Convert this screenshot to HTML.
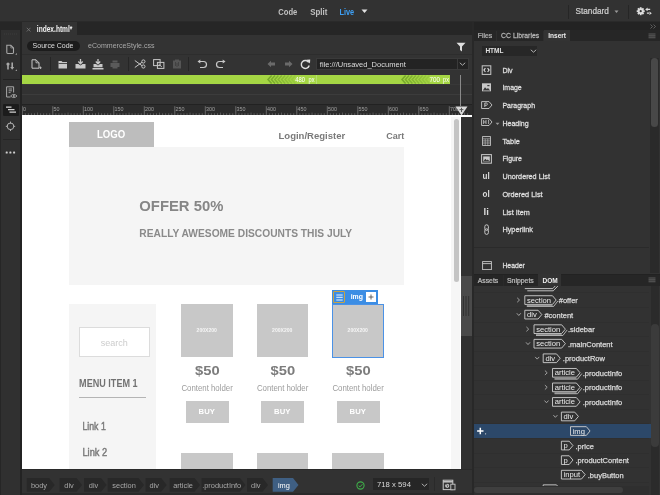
<!DOCTYPE html>
<html><head><meta charset="utf-8">
<style>
*{margin:0;padding:0;box-sizing:border-box}
html,body{width:660px;height:495px;overflow:hidden;background:#262626;font-family:"Liberation Sans",sans-serif}
.a{position:absolute;display:block}
.t{position:absolute;white-space:nowrap;line-height:1}
svg text{font-family:"Liberation Sans",sans-serif;white-space:pre}
svg.a{will-change:transform}
</style></head><body>
<div class="a" style="left:0px;top:0px;width:660px;height:22px;background:#323232;"></div>
<div class="a" style="left:0px;top:21.3px;width:660px;height:0.7px;background:#2a2a2a;"></div>
<svg class="a" style="left:276px;top:-15px;" width="25" height="40"><text x="0" y="0" transform="translate(2.30 30.20) scale(0.860 1)" font-size="8.84" fill="#c2c2c2" font-weight="bold">Code</text></svg>
<svg class="a" style="left:308px;top:-15px;" width="24" height="40"><text x="0" y="0" transform="translate(2.20 30.20) scale(0.893 1)" font-size="8.84" fill="#c2c2c2" font-weight="bold">Split</text></svg>
<svg class="a" style="left:337px;top:-15px;" width="21" height="40"><text x="0" y="0" transform="translate(2.40 30.20) scale(0.831 1)" font-size="8.84" fill="#3ea0f5" font-weight="bold">Live</text></svg>
<svg class="a" style="left:361px;top:9px;" width="7" height="5" viewBox="0 0 7 5"><path d="M0.5 0.5 L6.5 0.5 L3.5 4 Z" fill="#e0e0e0"/></svg>
<div class="a" style="left:568px;top:4.5px;width:1px;height:14px;background:#262626;"></div>
<div class="a" style="left:628px;top:4.5px;width:1px;height:14px;background:#262626;"></div>
<svg class="a" style="left:573px;top:-17px;" width="40" height="40"><text x="0" y="0" transform="translate(2.50 30.90) scale(0.887 1)" font-size="9.28" fill="#cdcdcd" stroke="#cdcdcd" stroke-width="0.25">Standard</text></svg>
<svg class="a" style="left:614px;top:10px;" width="5" height="4" viewBox="0 0 5 4"><path d="M0.5 0.5 L4.5 0.5 L2.5 3 Z" fill="#9a9a9a"/></svg>
<svg class="a" style="left:634px;top:4px;" width="20" height="14" viewBox="0 0 20 14"><g fill="#dcdcdc" transform="translate(6.7 7.2)"><circle r="3"/>
<rect x="-0.9" y="-4" width="1.8" height="8"/><rect x="-4" y="-0.9" width="8" height="1.8"/>
<rect x="-0.9" y="-4" width="1.8" height="8" transform="rotate(45)"/><rect x="-0.9" y="-4" width="1.8" height="8" transform="rotate(-45)"/></g>
<circle cx="6.7" cy="7.2" r="1.1" fill="#323232"/>
<path d="M11.2 5.4 L13.6 3.6 V7.2 Z M13 4.8 H16.2 V6 H13 Z M17.8 9.2 L15.4 7.4 V11 Z M12.9 8.6 H16 V9.8 H12.9 Z" fill="#dcdcdc"/></svg>
<div class="a" style="left:0px;top:22px;width:22px;height:473px;background:#262626;"></div>
<div class="a" style="left:1px;top:30px;width:19px;height:465px;background:#303030;"></div>
<div class="a" style="left:20px;top:30px;width:2px;height:465px;background:#232323;"></div>
<svg class="a" style="left:4px;top:33px;" width="13" height="2" viewBox="0 0 13 2"><path d="M0 1 H13" stroke="#3c3c3c" stroke-width="1" stroke-dasharray="1 1"/></svg>
<svg class="a" style="left:5px;top:44px;" width="13" height="12" viewBox="0 0 13 12"><path d="M1.8 1.3 H5.8 L8.5 4 V8.6 Q8.5 9.5 7.6 9.5 H2.7 Q1.8 9.5 1.8 8.6 Z" fill="none" stroke="#a8a8a8" stroke-width="1.1"/><path d="M5.8 1.3 V4 H8.5" fill="none" stroke="#a8a8a8" stroke-width="0.6"/><path d="M12 9 V10.8 H10.2 Z" fill="#999"/></svg>
<svg class="a" style="left:5px;top:61px;" width="13" height="12" viewBox="0 0 13 12"><path d="M3 8.6 V3.8 M7.2 1.5 V6.8" stroke="#a8a8a8" stroke-width="1.6" fill="none"/><circle cx="3" cy="3" r="1.6" fill="#a8a8a8"/><path d="M5.2 6 L7.2 8.8 L9.2 6 Z" fill="#a8a8a8"/><path d="M12 8.3 V10.1 H10.2 Z" fill="#999"/></svg>
<div class="a" style="left:3px;top:79px;width:17px;height:0.8px;background:#222222;"></div>
<svg class="a" style="left:5px;top:86px;" width="13" height="13" viewBox="0 0 13 13"><path d="M1.6 0.8 H8.6 V6.5 M1.6 0.8 V11 H5.5" fill="none" stroke="#a8a8a8" stroke-width="1"/><path d="M3.6 3 H7 M3.6 4.8 H7 M3.6 6.6 H5.6" stroke="#a8a8a8" stroke-width="0.9"/><path d="M5.6 10 Q8.8 6.8 12 10 Q8.8 13.2 5.6 10 Z" fill="#2a2a2a" stroke="#a8a8a8" stroke-width="0.9"/><circle cx="8.8" cy="10" r="1" fill="#a8a8a8"/></svg>
<div class="a" style="left:3px;top:103.5px;width:16px;height:12.5px;background:#1c1c1c;border-radius:1px"></div>
<svg class="a" style="left:5px;top:105px;" width="12" height="10" viewBox="0 0 12 10"><path d="M1 2.2 H6.5 M3 4.6 H9.5 M4.5 7.2 H11" stroke="#d0d0d0" stroke-width="1.2"/></svg>
<svg class="a" style="left:5px;top:121px;" width="11" height="11" viewBox="0 0 11 11"><circle cx="5.5" cy="5.3" r="3.3" fill="none" stroke="#b0b0b0" stroke-width="1"/><path d="M5.5 0.6 V2.6 M5.5 8 V10 M0.8 5.3 H2.8 M8.2 5.3 H10.2" stroke="#b0b0b0" stroke-width="1"/></svg>
<div class="a" style="left:3px;top:139.2px;width:17px;height:0.8px;background:#262626;"></div>
<svg class="a" style="left:5px;top:151.2px;" width="12" height="3" viewBox="0 0 12 3"><rect x="0.7" y="0.5" width="2" height="2" rx="0.6" fill="#d0d0d0"/><rect x="4.4" y="0.5" width="2" height="2" rx="0.6" fill="#d0d0d0"/><rect x="8.1" y="0.5" width="2" height="2" rx="0.6" fill="#d0d0d0"/></svg>
<div class="a" style="left:22px;top:22px;width:450px;height:13px;background:#262626;"></div>
<div class="a" style="left:22px;top:22px;width:55px;height:13px;background:#333333;"></div>
<svg class="a" style="left:26px;top:27px;" width="5" height="5" viewBox="0 0 5 5"><path d="M0.8 0.8 L4.5 4.5 M4.5 0.8 L0.8 4.5" stroke="#7a7a7a" stroke-width="0.8"/></svg>
<svg class="a" style="left:34px;top:2px;" width="42" height="40"><text x="0" y="0" transform="translate(2.80 30.10) scale(0.812 1)" font-size="8.14" fill="#f0f0f0" font-weight="bold">index.html*</text></svg>
<div class="a" style="left:22px;top:35px;width:450px;height:19px;background:#333333;"></div>
<div class="a" style="left:27px;top:40.5px;width:52.5px;height:10.5px;background:#1c1c1c;border-radius:6px"></div>
<svg class="a" style="left:30px;top:18px;" width="47" height="40"><text x="0" y="0" transform="translate(2.60 30.00) scale(0.862 1)" font-size="8.12" fill="#dedede">Source Code</text></svg>
<svg class="a" style="left:86px;top:18px;" width="73" height="40"><text x="0" y="0" transform="translate(2.00 30.10) scale(0.902 1)" font-size="7.83" fill="#a8a8a8">eCommerceStyle.css</text></svg>
<svg class="a" style="left:456px;top:42px;" width="10" height="10" viewBox="0 0 10 10"><path d="M0.5 0.8 H9.5 L6 4.6 V9.4 L4 8 V4.6 Z" fill="#e0e0e0"/></svg>
<div class="a" style="left:22px;top:54px;width:450px;height:16px;background:#333333;"></div>
<div class="a" style="left:22px;top:54px;width:450px;height:0.8px;background:#2d2d2d;"></div>
<div class="a" style="left:22px;top:70px;width:450px;height:15px;background:#333333;"></div>
<svg class="a" style="left:31px;top:59px;" width="11" height="10" viewBox="0 0 11 10"><path d="M1 0.8 H5 L8 3.8 V9.2 H1 Z" fill="none" stroke="#c8c8c8" stroke-width="1"/><path d="M5 0.8 V3.8 H8" fill="none" stroke="#c8c8c8" stroke-width="0.8"/><path d="M9.5 7.5 V10 M8.3 8.8 H10.7" stroke="#c8c8c8" stroke-width="0.8"/></svg>
<div class="a" style="left:50px;top:57px;width:1px;height:14px;background:#262626;"></div>
<svg class="a" style="left:58px;top:60px;" width="10" height="9" viewBox="0 0 10 9"><path d="M0.5 1 H3.5 L4.5 2 H9 V8.5 H0.5 Z" fill="#c8c8c8"/><path d="M0.5 3.5 H9" stroke="#2e2e2e" stroke-width="0.8"/></svg>
<svg class="a" style="left:75px;top:59px;" width="11" height="10" viewBox="0 0 11 10"><path d="M5.5 0 V4.5 M3.3 2.5 L5.5 4.8 L7.7 2.5" stroke="#c8c8c8" stroke-width="1.3" fill="none"/><path d="M0.5 5 H3.5 L5.5 6.5 L7.5 5 H10.5 V9.5 H0.5 Z" fill="#c8c8c8"/></svg>
<svg class="a" style="left:92px;top:58.5px;" width="12" height="11" viewBox="0 0 12 11"><path d="M6 0 V4.5 M3.8 2.5 L6 4.8 L8.2 2.5" stroke="#c8c8c8" stroke-width="1.3" fill="none"/><path d="M1.5 5 H4 L6 6.5 L8 5 H10.5 V8.3 H1.5 Z" fill="#c8c8c8"/><path d="M0.5 9 H11.5 V10.5 H0.5 Z" fill="#c8c8c8"/></svg>
<svg class="a" style="left:110px;top:59.5px;" width="10" height="9" viewBox="0 0 10 9"><path d="M2.5 0.5 H7.5 V2.5 H2.5 Z M0.5 3 H9.5 V7 H7.5 V8.5 H2.5 V7 H0.5 Z" fill="#5a5a5a"/></svg>
<div class="a" style="left:127.5px;top:57px;width:1px;height:14px;background:#262626;"></div>
<svg class="a" style="left:134px;top:59px;" width="12" height="10" viewBox="0 0 12 10"><circle cx="9.4" cy="2.5" r="1.6" fill="none" stroke="#c8c8c8" stroke-width="1"/><circle cx="9.4" cy="7.5" r="1.6" fill="none" stroke="#c8c8c8" stroke-width="1"/><path d="M8 3.3 L0.8 8.5 M8 6.7 L0.8 1.5" stroke="#c8c8c8" stroke-width="1"/></svg>
<svg class="a" style="left:152.5px;top:59px;" width="12" height="10" viewBox="0 0 12 10"><rect x="0.6" y="0.6" width="6.5" height="6" fill="none" stroke="#c8c8c8" stroke-width="1"/><rect x="4.4" y="3.4" width="6.5" height="6" fill="none" stroke="#c8c8c8" stroke-width="1"/><path d="M5.5 5 L9 8" stroke="#c8c8c8" stroke-width="0.8"/></svg>
<svg class="a" style="left:171.5px;top:59px;" width="10" height="10" viewBox="0 0 10 10"><path d="M1 1.5 H3 V0.5 H7 V1.5 H9 V9.5 H1 Z" fill="#555"/><path d="M3.5 3 V7 M5 4 V8 M6.5 3 V7" stroke="#3a3a3a" stroke-width="0.7"/></svg>
<div class="a" style="left:188px;top:57px;width:1px;height:14px;background:#262626;"></div>
<svg class="a" style="left:197px;top:59px;" width="11" height="10" viewBox="0 0 11 10"><path d="M2.5 2.5 H6.5 A3 3 0 0 1 6.5 8.5 H3" fill="none" stroke="#c8c8c8" stroke-width="1.2"/><path d="M0.5 2.5 L3.3 0.5 V4.5 Z" fill="#c8c8c8"/></svg>
<svg class="a" style="left:215px;top:59px;" width="11" height="10" viewBox="0 0 11 10"><path d="M8.5 2.5 H4.5 A3 3 0 0 0 4.5 8.5 H8" fill="none" stroke="#c8c8c8" stroke-width="1.2"/><path d="M10.5 2.5 L7.7 0.5 V4.5 Z" fill="#c8c8c8"/></svg>
<svg class="a" style="left:267px;top:60px;" width="9" height="8" viewBox="0 0 9 8"><path d="M0.5 4 L4 0.8 V2.6 H8 V5.4 H4 V7.2 Z" fill="#6a6a6a"/></svg>
<svg class="a" style="left:284px;top:60px;" width="9" height="8" viewBox="0 0 9 8"><path d="M8.5 4 L5 0.8 V2.6 H1 V5.4 H5 V7.2 Z" fill="#6a6a6a"/></svg>
<svg class="a" style="left:299.5px;top:59px;" width="11" height="11" viewBox="0 0 11 11"><path d="M8.7 3.3 A4 4 0 1 0 9.2 6.5" fill="none" stroke="#e0e0e0" stroke-width="1.4"/><path d="M6.2 0.8 L10.2 0.6 L10 4.6 Z" fill="#e0e0e0"/></svg>
<div class="a" style="left:315.5px;top:58.4px;width:153px;height:11.4px;background:#232323;border:1px solid #3a3a3a"></div>
<svg class="a" style="left:317px;top:36px;" width="93" height="40"><text x="0" y="0" transform="translate(2.80 30.60) scale(0.980 1)" font-size="7.68" fill="#dcdcdc">file:///Unsaved_Document</text></svg>
<div class="a" style="left:457px;top:58.4px;width:11.5px;height:11.4px;background:#232323;border:1px solid #3a3a3a"></div>
<svg class="a" style="left:458.5px;top:62px;" width="7" height="4" viewBox="0 0 7 4"><path d="M0.8 0.8 L3.5 3.2 L6.2 0.8" fill="none" stroke="#bbb" stroke-width="0.9"/></svg>
<div class="a" style="left:22px;top:75px;width:428px;height:9.3px;background:#a5d644;"></div>
<svg class="a" style="left:266px;top:75px;" width="34" height="9.2" viewBox="0 0 34 9.2"><path d="M5.6 0.6 L2.0 4.6 L5.6 8.6" fill="none" stroke="#74a52a" stroke-width="1.5" opacity="0.95"/><path d="M9.0 0.6 L5.4 4.6 L9.0 8.6" fill="none" stroke="#74a52a" stroke-width="1.5" opacity="0.85"/><path d="M12.4 0.6 L8.8 4.6 L12.4 8.6" fill="none" stroke="#74a52a" stroke-width="1.5" opacity="0.75"/><path d="M15.799999999999999 0.6 L12.2 4.6 L15.799999999999999 8.6" fill="none" stroke="#74a52a" stroke-width="1.5" opacity="0.65"/><path d="M19.2 0.6 L15.6 4.6 L19.2 8.6" fill="none" stroke="#74a52a" stroke-width="1.5" opacity="0.55"/><path d="M22.6 0.6 L19.0 4.6 L22.6 8.6" fill="none" stroke="#74a52a" stroke-width="1.5" opacity="0.45"/><path d="M26.0 0.6 L22.4 4.6 L26.0 8.6" fill="none" stroke="#74a52a" stroke-width="1.5" opacity="0.35"/><path d="M29.400000000000002 0.6 L25.8 4.6 L29.400000000000002 8.6" fill="none" stroke="#74a52a" stroke-width="1.5" opacity="0.25"/></svg>
<svg class="a" style="left:293px;top:52px;" width="16" height="40"><text x="0" y="0" transform="translate(2.20 30.00) scale(0.844 1)" font-size="6.96" fill="#ffffff">480</text></svg>
<svg class="a" style="left:306px;top:52px;" width="13" height="40"><text x="0" y="0" transform="translate(2.50 30.00) scale(0.815 1)" font-size="6.98" fill="#ffffff">px</text></svg>
<div class="a" style="left:316px;top:75px;width:1px;height:9.2px;background:#b6de70;"></div>
<svg class="a" style="left:400px;top:75px;" width="34" height="9.2" viewBox="0 0 34 9.2"><path d="M5.6 0.6 L2.0 4.6 L5.6 8.6" fill="none" stroke="#74a52a" stroke-width="1.5" opacity="0.95"/><path d="M9.0 0.6 L5.4 4.6 L9.0 8.6" fill="none" stroke="#74a52a" stroke-width="1.5" opacity="0.85"/><path d="M12.4 0.6 L8.8 4.6 L12.4 8.6" fill="none" stroke="#74a52a" stroke-width="1.5" opacity="0.75"/><path d="M15.799999999999999 0.6 L12.2 4.6 L15.799999999999999 8.6" fill="none" stroke="#74a52a" stroke-width="1.5" opacity="0.65"/><path d="M19.2 0.6 L15.6 4.6 L19.2 8.6" fill="none" stroke="#74a52a" stroke-width="1.5" opacity="0.55"/><path d="M22.6 0.6 L19.0 4.6 L22.6 8.6" fill="none" stroke="#74a52a" stroke-width="1.5" opacity="0.45"/><path d="M26.0 0.6 L22.4 4.6 L26.0 8.6" fill="none" stroke="#74a52a" stroke-width="1.5" opacity="0.35"/><path d="M29.400000000000002 0.6 L25.8 4.6 L29.400000000000002 8.6" fill="none" stroke="#74a52a" stroke-width="1.5" opacity="0.25"/></svg>
<svg class="a" style="left:427px;top:52px;" width="17" height="40"><text x="0" y="0" transform="translate(2.50 30.00) scale(0.904 1)" font-size="6.96" fill="#ffffff">700</text></svg>
<svg class="a" style="left:441px;top:52px;" width="13" height="40"><text x="0" y="0" transform="translate(2.00 30.00) scale(0.815 1)" font-size="6.98" fill="#ffffff">px</text></svg>
<div class="a" style="left:22px;top:85px;width:450px;height:19.5px;background:#323232;"></div>
<div class="a" style="left:22px;top:84.3px;width:450px;height:0.7px;background:#383838;"></div>
<div class="a" style="left:22px;top:94.3px;width:450px;height:0.8px;background:#3c3c3c;"></div>
<div class="a" style="left:22px;top:104px;width:450px;height:1.4px;background:#222222;"></div>
<div class="a" style="left:22px;top:105.4px;width:450px;height:10px;background:#2c2c2c;"></div>
<svg class="a" style="left:22px;top:105px;" width="450" height="10.5" viewBox="0 0 450 10.5"><path d="M0.30 1.2 V10.5" stroke="#7a7a7a" stroke-width="0.8"/><text x="1.10" y="5.8" font-size="5.4" fill="#a0a0a0" font-family="Liberation Sans">0</text><path d="M3.35 8.3 V10.5" stroke="#777" stroke-width="0.7"/><path d="M6.40 8.3 V10.5" stroke="#777" stroke-width="0.7"/><path d="M9.45 8.3 V10.5" stroke="#777" stroke-width="0.7"/><path d="M12.50 8.3 V10.5" stroke="#777" stroke-width="0.7"/><path d="M15.55 7.6 V10.5" stroke="#707070" stroke-width="0.7"/><path d="M18.60 8.3 V10.5" stroke="#777" stroke-width="0.7"/><path d="M21.65 8.3 V10.5" stroke="#777" stroke-width="0.7"/><path d="M24.70 8.3 V10.5" stroke="#777" stroke-width="0.7"/><path d="M27.75 8.3 V10.5" stroke="#777" stroke-width="0.7"/><path d="M30.80 1.2 V10.5" stroke="#7a7a7a" stroke-width="0.8"/><text x="31.60" y="5.8" font-size="5.4" fill="#a0a0a0" font-family="Liberation Sans">50</text><path d="M33.85 8.3 V10.5" stroke="#777" stroke-width="0.7"/><path d="M36.90 8.3 V10.5" stroke="#777" stroke-width="0.7"/><path d="M39.95 8.3 V10.5" stroke="#777" stroke-width="0.7"/><path d="M43.00 8.3 V10.5" stroke="#777" stroke-width="0.7"/><path d="M46.05 7.6 V10.5" stroke="#707070" stroke-width="0.7"/><path d="M49.10 8.3 V10.5" stroke="#777" stroke-width="0.7"/><path d="M52.15 8.3 V10.5" stroke="#777" stroke-width="0.7"/><path d="M55.20 8.3 V10.5" stroke="#777" stroke-width="0.7"/><path d="M58.25 8.3 V10.5" stroke="#777" stroke-width="0.7"/><path d="M61.30 1.2 V10.5" stroke="#7a7a7a" stroke-width="0.8"/><text x="62.10" y="5.8" font-size="5.4" fill="#a0a0a0" font-family="Liberation Sans">100</text><path d="M64.35 8.3 V10.5" stroke="#777" stroke-width="0.7"/><path d="M67.40 8.3 V10.5" stroke="#777" stroke-width="0.7"/><path d="M70.45 8.3 V10.5" stroke="#777" stroke-width="0.7"/><path d="M73.50 8.3 V10.5" stroke="#777" stroke-width="0.7"/><path d="M76.55 7.6 V10.5" stroke="#707070" stroke-width="0.7"/><path d="M79.60 8.3 V10.5" stroke="#777" stroke-width="0.7"/><path d="M82.65 8.3 V10.5" stroke="#777" stroke-width="0.7"/><path d="M85.70 8.3 V10.5" stroke="#777" stroke-width="0.7"/><path d="M88.75 8.3 V10.5" stroke="#777" stroke-width="0.7"/><path d="M91.80 1.2 V10.5" stroke="#7a7a7a" stroke-width="0.8"/><text x="92.60" y="5.8" font-size="5.4" fill="#a0a0a0" font-family="Liberation Sans">150</text><path d="M94.85 8.3 V10.5" stroke="#777" stroke-width="0.7"/><path d="M97.90 8.3 V10.5" stroke="#777" stroke-width="0.7"/><path d="M100.95 8.3 V10.5" stroke="#777" stroke-width="0.7"/><path d="M104.00 8.3 V10.5" stroke="#777" stroke-width="0.7"/><path d="M107.05 7.6 V10.5" stroke="#707070" stroke-width="0.7"/><path d="M110.10 8.3 V10.5" stroke="#777" stroke-width="0.7"/><path d="M113.15 8.3 V10.5" stroke="#777" stroke-width="0.7"/><path d="M116.20 8.3 V10.5" stroke="#777" stroke-width="0.7"/><path d="M119.25 8.3 V10.5" stroke="#777" stroke-width="0.7"/><path d="M122.30 1.2 V10.5" stroke="#7a7a7a" stroke-width="0.8"/><text x="123.10" y="5.8" font-size="5.4" fill="#a0a0a0" font-family="Liberation Sans">200</text><path d="M125.35 8.3 V10.5" stroke="#777" stroke-width="0.7"/><path d="M128.40 8.3 V10.5" stroke="#777" stroke-width="0.7"/><path d="M131.45 8.3 V10.5" stroke="#777" stroke-width="0.7"/><path d="M134.50 8.3 V10.5" stroke="#777" stroke-width="0.7"/><path d="M137.55 7.6 V10.5" stroke="#707070" stroke-width="0.7"/><path d="M140.60 8.3 V10.5" stroke="#777" stroke-width="0.7"/><path d="M143.65 8.3 V10.5" stroke="#777" stroke-width="0.7"/><path d="M146.70 8.3 V10.5" stroke="#777" stroke-width="0.7"/><path d="M149.75 8.3 V10.5" stroke="#777" stroke-width="0.7"/><path d="M152.80 1.2 V10.5" stroke="#7a7a7a" stroke-width="0.8"/><text x="153.60" y="5.8" font-size="5.4" fill="#a0a0a0" font-family="Liberation Sans">250</text><path d="M155.85 8.3 V10.5" stroke="#777" stroke-width="0.7"/><path d="M158.90 8.3 V10.5" stroke="#777" stroke-width="0.7"/><path d="M161.95 8.3 V10.5" stroke="#777" stroke-width="0.7"/><path d="M165.00 8.3 V10.5" stroke="#777" stroke-width="0.7"/><path d="M168.05 7.6 V10.5" stroke="#707070" stroke-width="0.7"/><path d="M171.10 8.3 V10.5" stroke="#777" stroke-width="0.7"/><path d="M174.15 8.3 V10.5" stroke="#777" stroke-width="0.7"/><path d="M177.20 8.3 V10.5" stroke="#777" stroke-width="0.7"/><path d="M180.25 8.3 V10.5" stroke="#777" stroke-width="0.7"/><path d="M183.30 1.2 V10.5" stroke="#7a7a7a" stroke-width="0.8"/><text x="184.10" y="5.8" font-size="5.4" fill="#a0a0a0" font-family="Liberation Sans">300</text><path d="M186.35 8.3 V10.5" stroke="#777" stroke-width="0.7"/><path d="M189.40 8.3 V10.5" stroke="#777" stroke-width="0.7"/><path d="M192.45 8.3 V10.5" stroke="#777" stroke-width="0.7"/><path d="M195.50 8.3 V10.5" stroke="#777" stroke-width="0.7"/><path d="M198.55 7.6 V10.5" stroke="#707070" stroke-width="0.7"/><path d="M201.60 8.3 V10.5" stroke="#777" stroke-width="0.7"/><path d="M204.65 8.3 V10.5" stroke="#777" stroke-width="0.7"/><path d="M207.70 8.3 V10.5" stroke="#777" stroke-width="0.7"/><path d="M210.75 8.3 V10.5" stroke="#777" stroke-width="0.7"/><path d="M213.80 1.2 V10.5" stroke="#7a7a7a" stroke-width="0.8"/><text x="214.60" y="5.8" font-size="5.4" fill="#a0a0a0" font-family="Liberation Sans">350</text><path d="M216.85 8.3 V10.5" stroke="#777" stroke-width="0.7"/><path d="M219.90 8.3 V10.5" stroke="#777" stroke-width="0.7"/><path d="M222.95 8.3 V10.5" stroke="#777" stroke-width="0.7"/><path d="M226.00 8.3 V10.5" stroke="#777" stroke-width="0.7"/><path d="M229.05 7.6 V10.5" stroke="#707070" stroke-width="0.7"/><path d="M232.10 8.3 V10.5" stroke="#777" stroke-width="0.7"/><path d="M235.15 8.3 V10.5" stroke="#777" stroke-width="0.7"/><path d="M238.20 8.3 V10.5" stroke="#777" stroke-width="0.7"/><path d="M241.25 8.3 V10.5" stroke="#777" stroke-width="0.7"/><path d="M244.30 1.2 V10.5" stroke="#7a7a7a" stroke-width="0.8"/><text x="245.10" y="5.8" font-size="5.4" fill="#a0a0a0" font-family="Liberation Sans">400</text><path d="M247.35 8.3 V10.5" stroke="#777" stroke-width="0.7"/><path d="M250.40 8.3 V10.5" stroke="#777" stroke-width="0.7"/><path d="M253.45 8.3 V10.5" stroke="#777" stroke-width="0.7"/><path d="M256.50 8.3 V10.5" stroke="#777" stroke-width="0.7"/><path d="M259.55 7.6 V10.5" stroke="#707070" stroke-width="0.7"/><path d="M262.60 8.3 V10.5" stroke="#777" stroke-width="0.7"/><path d="M265.65 8.3 V10.5" stroke="#777" stroke-width="0.7"/><path d="M268.70 8.3 V10.5" stroke="#777" stroke-width="0.7"/><path d="M271.75 8.3 V10.5" stroke="#777" stroke-width="0.7"/><path d="M274.80 1.2 V10.5" stroke="#7a7a7a" stroke-width="0.8"/><text x="275.60" y="5.8" font-size="5.4" fill="#a0a0a0" font-family="Liberation Sans">450</text><path d="M277.85 8.3 V10.5" stroke="#777" stroke-width="0.7"/><path d="M280.90 8.3 V10.5" stroke="#777" stroke-width="0.7"/><path d="M283.95 8.3 V10.5" stroke="#777" stroke-width="0.7"/><path d="M287.00 8.3 V10.5" stroke="#777" stroke-width="0.7"/><path d="M290.05 7.6 V10.5" stroke="#707070" stroke-width="0.7"/><path d="M293.10 8.3 V10.5" stroke="#777" stroke-width="0.7"/><path d="M296.15 8.3 V10.5" stroke="#777" stroke-width="0.7"/><path d="M299.20 8.3 V10.5" stroke="#777" stroke-width="0.7"/><path d="M302.25 8.3 V10.5" stroke="#777" stroke-width="0.7"/><path d="M305.30 1.2 V10.5" stroke="#7a7a7a" stroke-width="0.8"/><text x="306.10" y="5.8" font-size="5.4" fill="#a0a0a0" font-family="Liberation Sans">500</text><path d="M308.35 8.3 V10.5" stroke="#777" stroke-width="0.7"/><path d="M311.40 8.3 V10.5" stroke="#777" stroke-width="0.7"/><path d="M314.45 8.3 V10.5" stroke="#777" stroke-width="0.7"/><path d="M317.50 8.3 V10.5" stroke="#777" stroke-width="0.7"/><path d="M320.55 7.6 V10.5" stroke="#707070" stroke-width="0.7"/><path d="M323.60 8.3 V10.5" stroke="#777" stroke-width="0.7"/><path d="M326.65 8.3 V10.5" stroke="#777" stroke-width="0.7"/><path d="M329.70 8.3 V10.5" stroke="#777" stroke-width="0.7"/><path d="M332.75 8.3 V10.5" stroke="#777" stroke-width="0.7"/><path d="M335.80 1.2 V10.5" stroke="#7a7a7a" stroke-width="0.8"/><text x="336.60" y="5.8" font-size="5.4" fill="#a0a0a0" font-family="Liberation Sans">550</text><path d="M338.85 8.3 V10.5" stroke="#777" stroke-width="0.7"/><path d="M341.90 8.3 V10.5" stroke="#777" stroke-width="0.7"/><path d="M344.95 8.3 V10.5" stroke="#777" stroke-width="0.7"/><path d="M348.00 8.3 V10.5" stroke="#777" stroke-width="0.7"/><path d="M351.05 7.6 V10.5" stroke="#707070" stroke-width="0.7"/><path d="M354.10 8.3 V10.5" stroke="#777" stroke-width="0.7"/><path d="M357.15 8.3 V10.5" stroke="#777" stroke-width="0.7"/><path d="M360.20 8.3 V10.5" stroke="#777" stroke-width="0.7"/><path d="M363.25 8.3 V10.5" stroke="#777" stroke-width="0.7"/><path d="M366.30 1.2 V10.5" stroke="#7a7a7a" stroke-width="0.8"/><text x="367.10" y="5.8" font-size="5.4" fill="#a0a0a0" font-family="Liberation Sans">600</text><path d="M369.35 8.3 V10.5" stroke="#777" stroke-width="0.7"/><path d="M372.40 8.3 V10.5" stroke="#777" stroke-width="0.7"/><path d="M375.45 8.3 V10.5" stroke="#777" stroke-width="0.7"/><path d="M378.50 8.3 V10.5" stroke="#777" stroke-width="0.7"/><path d="M381.55 7.6 V10.5" stroke="#707070" stroke-width="0.7"/><path d="M384.60 8.3 V10.5" stroke="#777" stroke-width="0.7"/><path d="M387.65 8.3 V10.5" stroke="#777" stroke-width="0.7"/><path d="M390.70 8.3 V10.5" stroke="#777" stroke-width="0.7"/><path d="M393.75 8.3 V10.5" stroke="#777" stroke-width="0.7"/><path d="M396.80 1.2 V10.5" stroke="#7a7a7a" stroke-width="0.8"/><text x="397.60" y="5.8" font-size="5.4" fill="#a0a0a0" font-family="Liberation Sans">650</text><path d="M399.85 8.3 V10.5" stroke="#777" stroke-width="0.7"/><path d="M402.90 8.3 V10.5" stroke="#777" stroke-width="0.7"/><path d="M405.95 8.3 V10.5" stroke="#777" stroke-width="0.7"/><path d="M409.00 8.3 V10.5" stroke="#777" stroke-width="0.7"/><path d="M412.05 7.6 V10.5" stroke="#707070" stroke-width="0.7"/><path d="M415.10 8.3 V10.5" stroke="#777" stroke-width="0.7"/><path d="M418.15 8.3 V10.5" stroke="#777" stroke-width="0.7"/><path d="M421.20 8.3 V10.5" stroke="#777" stroke-width="0.7"/><path d="M424.25 8.3 V10.5" stroke="#777" stroke-width="0.7"/><path d="M427.30 1.2 V10.5" stroke="#7a7a7a" stroke-width="0.8"/><text x="428.10" y="5.8" font-size="5.4" fill="#a0a0a0" font-family="Liberation Sans">700</text><path d="M430.35 8.3 V10.5" stroke="#777" stroke-width="0.7"/><path d="M433.40 8.3 V10.5" stroke="#777" stroke-width="0.7"/><path d="M436.45 8.3 V10.5" stroke="#777" stroke-width="0.7"/><path d="M439.50 8.3 V10.5" stroke="#777" stroke-width="0.7"/><path d="M442.55 7.6 V10.5" stroke="#707070" stroke-width="0.7"/><path d="M445.60 8.3 V10.5" stroke="#777" stroke-width="0.7"/></svg>
<div class="a" style="left:22px;top:115px;width:450px;height:2px;background:#ffffff;"></div>
<div class="a" style="left:460.3px;top:75px;width:1.2px;height:31px;background:#8a8a8a;"></div>
<svg class="a" style="left:454.5px;top:106px;" width="13" height="10" viewBox="0 0 13 10"><path d="M0.5 0.5 H12.5 L6.5 9.5 Z" fill="#d8d8d8"/><path d="M6.5 1.8 V6 M4.6 3.6 H8.4" stroke="#555" stroke-width="1"/></svg>
<div class="a" style="left:22px;top:117px;width:439px;height:352px;background:#ffffff;"></div>
<div class="a" style="left:461px;top:117px;width:11px;height:352px;background:#313131;"></div>
<div class="a" style="left:472px;top:22px;width:2px;height:473px;background:#282828;"></div>
<div class="a" style="left:461.4px;top:276.4px;width:10.3px;height:59.4px;background:#4a4a4a;"></div>
<svg class="a" style="left:462px;top:296px;" width="8" height="20" viewBox="0 0 8 20"><path d="M1.5 0 V20 M4 0 V20 M6.7 0 V20" stroke="#2c2c2c" stroke-width="0.8"/></svg>
<div class="a" style="left:69px;top:122px;width:85px;height:25px;background:#bdbdbd;"></div>
<svg class="a" style="left:95px;top:108px;" width="35" height="40"><text x="0" y="0" transform="translate(2.00 30.10) scale(0.947 1)" font-size="10.14" fill="#ffffff" font-weight="bold">LOGO</text></svg>
<svg class="a" style="left:276px;top:108px;" width="73" height="40"><text x="0" y="0" transform="translate(2.50 30.50) scale(0.968 1)" font-size="9.86" fill="#7a7a7a" font-weight="bold">Login/Register</text></svg>
<svg class="a" style="left:384px;top:108px;" width="25" height="40"><text x="0" y="0" transform="translate(2.20 30.50) scale(0.918 1)" font-size="9.86" fill="#7a7a7a" font-weight="bold">Cart</text></svg>
<div class="a" style="left:69px;top:147px;width:335px;height:138px;background:#f5f5f5;"></div>
<svg class="a" style="left:137px;top:180px;" width="91" height="40"><text x="0" y="0" transform="translate(2.30 30.70) scale(0.966 1)" font-size="15.36" fill="#868686" font-weight="bold">OFFER 50%</text></svg>
<svg class="a" style="left:137px;top:206px;" width="220" height="40"><text x="0" y="0" transform="translate(2.30 30.70) scale(0.995 1)" font-size="10.29" fill="#8a8a8a" font-weight="bold">REALLY AWESOME DISCOUNTS THIS JULY</text></svg>
<div class="a" style="left:69px;top:304px;width:87px;height:165px;background:#f5f5f5;"></div>
<div class="a" style="left:79px;top:327px;width:70.7px;height:29.6px;background:#ffffff;border:1px solid #dcdcdc"></div>
<svg class="a" style="left:98px;top:315px;" width="34" height="40"><text x="0" y="0" transform="translate(2.80 30.50) scale(0.977 1)" font-size="9.24" fill="#cccccc">search</text></svg>
<svg class="a" style="left:77px;top:357px;" width="65" height="40"><text x="0" y="0" transform="translate(2.10 30.30) scale(0.908 1)" font-size="10.00" fill="#717171" font-weight="bold">MENU ITEM 1</text></svg>
<div class="a" style="left:78.5px;top:396.8px;width:67.5px;height:1px;background:#b4b4b4;"></div>
<svg class="a" style="left:80px;top:400px;" width="30" height="40"><text x="0" y="0" transform="translate(2.40 30.00) scale(0.828 1)" font-size="10.58" fill="#7a7a7a" stroke="#7a7a7a" stroke-width="0.45">Link 1</text></svg>
<svg class="a" style="left:80px;top:426px;" width="31" height="40"><text x="0" y="0" transform="translate(2.40 30.10) scale(0.881 1)" font-size="10.58" fill="#7a7a7a" stroke="#7a7a7a" stroke-width="0.45">Link 2</text></svg>
<div class="a" style="left:181px;top:304px;width:51.5px;height:53px;background:#c8c8c8;"></div>
<svg class="a" style="left:194px;top:301px;" width="27" height="40"><text x="0" y="0" transform="translate(2.60 30.90) scale(0.857 1)" font-size="5.94" fill="#f6f6f6" font-weight="bold">200X200</text></svg>
<svg class="a" style="left:193px;top:344px;" width="31" height="40"><text x="0" y="0" transform="translate(2.10 30.80) scale(1.109 1)" font-size="13.33" fill="#7c7c7c" font-weight="bold">$50</text></svg>
<svg class="a" style="left:179px;top:361px;" width="58" height="40"><text x="0" y="0" transform="translate(2.40 30.10) scale(0.903 1)" font-size="8.70" fill="#9c9c9c">Content holder</text></svg>
<div class="a" style="left:185.9px;top:401px;width:43.1px;height:21.6px;background:#c8c8c8;"></div>
<svg class="a" style="left:196px;top:384px;" width="23" height="40"><text x="0" y="0" transform="translate(2.60 30.10) scale(1.088 1)" font-size="7.10" fill="#ffffff" font-weight="bold">BUY</text></svg>
<div class="a" style="left:181px;top:453px;width:51.5px;height:16px;background:#c8c8c8;"></div>
<div class="a" style="left:256.5px;top:304px;width:51.5px;height:53px;background:#c8c8c8;"></div>
<svg class="a" style="left:270px;top:301px;" width="27" height="40"><text x="0" y="0" transform="translate(2.10 30.90) scale(0.857 1)" font-size="5.94" fill="#f6f6f6" font-weight="bold">200X200</text></svg>
<svg class="a" style="left:268px;top:344px;" width="31" height="40"><text x="0" y="0" transform="translate(2.60 30.80) scale(1.109 1)" font-size="13.33" fill="#7c7c7c" font-weight="bold">$50</text></svg>
<svg class="a" style="left:254px;top:361px;" width="58" height="40"><text x="0" y="0" transform="translate(2.90 30.10) scale(0.903 1)" font-size="8.70" fill="#9c9c9c">Content holder</text></svg>
<div class="a" style="left:261.4px;top:401px;width:43.1px;height:21.6px;background:#c8c8c8;"></div>
<svg class="a" style="left:272px;top:384px;" width="23" height="40"><text x="0" y="0" transform="translate(2.10 30.10) scale(1.088 1)" font-size="7.10" fill="#ffffff" font-weight="bold">BUY</text></svg>
<div class="a" style="left:256.5px;top:453px;width:51.5px;height:16px;background:#c8c8c8;"></div>
<div class="a" style="left:332px;top:304px;width:51.5px;height:53px;background:#c8c8c8;"></div>
<svg class="a" style="left:345px;top:301px;" width="27" height="40"><text x="0" y="0" transform="translate(2.60 30.90) scale(0.857 1)" font-size="5.94" fill="#f6f6f6" font-weight="bold">200X200</text></svg>
<svg class="a" style="left:344px;top:344px;" width="31" height="40"><text x="0" y="0" transform="translate(2.10 30.80) scale(1.109 1)" font-size="13.33" fill="#7c7c7c" font-weight="bold">$50</text></svg>
<svg class="a" style="left:330px;top:361px;" width="58" height="40"><text x="0" y="0" transform="translate(2.40 30.10) scale(0.903 1)" font-size="8.70" fill="#9c9c9c">Content holder</text></svg>
<div class="a" style="left:336.9px;top:401px;width:43.1px;height:21.6px;background:#c8c8c8;"></div>
<svg class="a" style="left:347px;top:384px;" width="23" height="40"><text x="0" y="0" transform="translate(2.60 30.10) scale(1.088 1)" font-size="7.10" fill="#ffffff" font-weight="bold">BUY</text></svg>
<div class="a" style="left:332px;top:453px;width:51.5px;height:16px;background:#c8c8c8;"></div>
<div class="a" style="left:331.5px;top:303.5px;width:52.5px;height:54px;background:transparent;border:1px solid #4b92e6"></div>
<div class="a" style="left:331.5px;top:290px;width:46.5px;height:13.5px;background:#3b8de4;"></div>
<div class="a" style="left:333.3px;top:291.3px;width:11.5px;height:11.5px;background:transparent;border:1px solid #c9a444;border-radius:1px"></div>
<svg class="a" style="left:335.5px;top:293.5px;" width="7" height="7" viewBox="0 0 7 7"><path d="M0.3 1 H6.7 M0.3 3.3 H6.7 M0.3 6 H6.7" stroke="#fff" stroke-width="0.9"/></svg>
<svg class="a" style="left:348px;top:268px;" width="19" height="40"><text x="0" y="0" transform="translate(2.70 30.70) scale(0.963 1)" font-size="7.17" fill="#ffffff" font-weight="bold">img</text></svg>
<div class="a" style="left:366px;top:292.2px;width:9.7px;height:10px;background:#ffffff;"></div>
<svg class="a" style="left:367px;top:293.2px;" width="8" height="8" viewBox="0 0 8 8"><path d="M4 1.5 V6.5 M1.5 4 H6.5" stroke="#555" stroke-width="0.9"/></svg>
<div class="a" style="left:451.3px;top:117px;width:9px;height:352px;background:#f6f6f6;"></div>
<div class="a" style="left:453.8px;top:119px;width:5.2px;height:163px;background:#c4c4c4;border-radius:3px"></div>
<div class="a" style="left:474px;top:22px;width:186px;height:8px;background:#232323;"></div>
<svg class="a" style="left:650px;top:24px;" width="8" height="5" viewBox="0 0 8 5"><path d="M0.5 0.5 L2.5 2.5 L0.5 4.5 M3.5 0.5 L5.5 2.5 L3.5 4.5" fill="none" stroke="#777" stroke-width="0.7"/></svg>
<div class="a" style="left:474px;top:30px;width:186px;height:10.5px;background:#262626;"></div>
<div class="a" style="left:496.1px;top:30.5px;width:0.8px;height:10px;background:#2e2e2e;"></div>
<div class="a" style="left:543.2px;top:30.5px;width:0.8px;height:10px;background:#2e2e2e;"></div>
<div class="a" style="left:544px;top:30px;width:26.2px;height:10.5px;background:#333333;"></div>
<svg class="a" style="left:475px;top:7px;" width="21" height="40"><text x="0" y="0" transform="translate(2.80 30.80) scale(0.961 1)" font-size="7.10" fill="#b4b4b4" stroke="#b4b4b4" stroke-width="0.25">Files</text></svg>
<svg class="a" style="left:499px;top:7px;" width="45" height="40"><text x="0" y="0" transform="translate(2.10 30.80) scale(0.966 1)" font-size="7.10" fill="#b4b4b4" stroke="#b4b4b4" stroke-width="0.25">CC Libraries</text></svg>
<svg class="a" style="left:546px;top:7px;" width="24" height="40"><text x="0" y="0" transform="translate(2.20 30.80) scale(0.925 1)" font-size="7.10" fill="#eeeeee" font-weight="bold">Insert</text></svg>
<svg class="a" style="left:647.5px;top:32.5px;" width="8" height="6" viewBox="0 0 8 6"><path d="M0.5 1 H7.5 M0.5 2.9 H7.5 M0.5 4.8 H7.5" stroke="#5c5c5c" stroke-width="1.1"/></svg>
<div class="a" style="left:474px;top:40.5px;width:186px;height:233.5px;background:#323232;"></div>
<div class="a" style="left:481.6px;top:45.9px;width:55.7px;height:10.1px;background:#272727;"></div>
<svg class="a" style="left:483px;top:23px;" width="25" height="40"><text x="0" y="0" transform="translate(2.40 30.20) scale(0.918 1)" font-size="7.10" fill="#e2e2e2" font-weight="bold">HTML</text></svg>
<svg class="a" style="left:529.5px;top:49px;" width="7" height="4" viewBox="0 0 7 4"><path d="M0.8 0.8 L3.5 3.2 L6.2 0.8" fill="none" stroke="#c0c0c0" stroke-width="0.9"/></svg>
<div class="a" style="left:649.5px;top:58px;width:9px;height:215px;background:#2a2a2a;"></div>
<div class="a" style="left:650.5px;top:58px;width:7.5px;height:69px;background:#484848;border-radius:4px"></div>
<svg class="a" style="left:500px;top:42px;" width="17" height="40"><text x="0" y="0" transform="translate(2.40 30.60) scale(0.917 1)" font-size="7.70" fill="#dedede" stroke="#dedede" stroke-width="0.3">Div</text></svg>
<svg class="a" style="left:500px;top:60px;" width="26" height="40"><text x="0" y="0" transform="translate(2.40 30.35) scale(0.906 1)" font-size="7.70" fill="#dedede" stroke="#dedede" stroke-width="0.3">Image</text></svg>
<svg class="a" style="left:500px;top:78px;" width="39" height="40"><text x="0" y="0" transform="translate(2.40 30.10) scale(0.909 1)" font-size="7.70" fill="#dedede" stroke="#dedede" stroke-width="0.3">Paragraph</text></svg>
<svg class="a" style="left:500px;top:95px;" width="33" height="40"><text x="0" y="0" transform="translate(2.40 30.85) scale(0.920 1)" font-size="7.70" fill="#dedede" stroke="#dedede" stroke-width="0.3">Heading</text></svg>
<svg class="a" style="left:500px;top:113px;" width="24" height="40"><text x="0" y="0" transform="translate(2.40 30.60) scale(0.951 1)" font-size="7.70" fill="#dedede" stroke="#dedede" stroke-width="0.3">Table</text></svg>
<svg class="a" style="left:500px;top:131px;" width="26" height="40"><text x="0" y="0" transform="translate(2.40 30.35) scale(0.898 1)" font-size="7.70" fill="#dedede" stroke="#dedede" stroke-width="0.3">Figure</text></svg>
<svg class="a" style="left:500px;top:149px;" width="54" height="40"><text x="0" y="0" transform="translate(2.40 30.10) scale(0.942 1)" font-size="7.70" fill="#dedede" stroke="#dedede" stroke-width="0.3">Unordered List</text></svg>
<svg class="a" style="left:500px;top:166px;" width="47" height="40"><text x="0" y="0" transform="translate(2.40 30.85) scale(0.948 1)" font-size="7.70" fill="#dedede" stroke="#dedede" stroke-width="0.3">Ordered List</text></svg>
<svg class="a" style="left:500px;top:184px;" width="34" height="40"><text x="0" y="0" transform="translate(2.40 30.60) scale(0.941 1)" font-size="7.70" fill="#dedede" stroke="#dedede" stroke-width="0.3">List Item</text></svg>
<svg class="a" style="left:500px;top:202px;" width="37" height="40"><text x="0" y="0" transform="translate(2.40 30.35) scale(0.955 1)" font-size="7.70" fill="#dedede" stroke="#dedede" stroke-width="0.3">Hyperlink</text></svg>
<svg class="a" style="left:500px;top:237px;" width="29" height="40"><text x="0" y="0" transform="translate(2.40 30.90) scale(0.891 1)" font-size="7.70" fill="#dedede" stroke="#dedede" stroke-width="0.3">Header</text></svg>
<svg class="a" style="left:481px;top:64.5px;" width="11" height="10" viewBox="0 0 11 10"><rect x="1.2" y="0.8" width="8.6" height="8.6" fill="none" stroke="#c8c8c8" stroke-width="1"/><path d="M4.4 3.2 L2.9 5.1 L4.4 7 M6.6 3.2 L8.1 5.1 L6.6 7" fill="none" stroke="#e0e0e0" stroke-width="1.1"/></svg>
<svg class="a" style="left:481px;top:83px;" width="11" height="9" viewBox="0 0 11 9"><rect x="1" y="0.3" width="9" height="8" fill="#c8c8c8"/><path d="M1.8 7.5 L4 4.2 L5.8 6 L7 5 L9.2 7.5 Z" fill="#3a3a3a"/><rect x="6.3" y="2" width="2.2" height="1.2" fill="#3a3a3a"/></svg>
<svg class="a" style="left:480.5px;top:100.5px;" width="12" height="9" viewBox="0 0 12 9"><path d="M0.6 0.6 H8 L11 4 L8 7.5 H0.6 Z" fill="none" stroke="#c8c8c8" stroke-width="0.9"/><path d="M3.8 6 V2 H5.5 A1.2 1.2 0 0 1 5.5 4.3 H3.8" fill="none" stroke="#c8c8c8" stroke-width="0.9"/></svg>
<svg class="a" style="left:480.5px;top:118.3px;" width="12" height="9" viewBox="0 0 12 9"><path d="M0.6 0.6 H8 L11 4 L8 7.5 H0.6 Z" fill="none" stroke="#c8c8c8" stroke-width="0.9"/><path d="M2.6 2 V6 M5 2 V6 M2.6 4 H5 M7 2.3 L7.6 2 V6" fill="none" stroke="#c8c8c8" stroke-width="0.8"/></svg>
<svg class="a" style="left:494.5px;top:121.5px;" width="5" height="4" viewBox="0 0 5 4"><path d="M0.5 0.8 L4.5 0.8 L2.5 3 Z" fill="#999"/></svg>
<svg class="a" style="left:481.5px;top:136px;" width="9" height="10" viewBox="0 0 9 10"><rect x="0.6" y="0.6" width="7.8" height="8.8" fill="none" stroke="#c8c8c8" stroke-width="0.9"/><path d="M0.6 2.8 H8.4 M0.6 4.9 H8.4 M0.6 7 H8.4 M3.2 2.8 V9.4 M5.8 2.8 V9.4" stroke="#c8c8c8" stroke-width="0.6"/></svg>
<svg class="a" style="left:481px;top:153.5px;" width="11" height="10" viewBox="0 0 11 10"><rect x="0.6" y="0.6" width="9.8" height="8.6" fill="none" stroke="#c8c8c8" stroke-width="1"/><rect x="2.2" y="2.4" width="6.6" height="5" fill="#c8c8c8"/><path d="M2.6 7 L4.3 4.8 L5.8 6.3 L6.6 5.6 L8.4 7 Z" fill="#3a3a3a"/></svg>
<svg class="a" style="left:480px;top:149px;" width="14" height="40"><text x="0" y="0" transform="translate(2.60 30.40) scale(0.941 1)" font-size="8.60" fill="#dadada" font-weight="bold">ul</text></svg>
<svg class="a" style="left:480px;top:167px;" width="14" height="40"><text x="0" y="0" transform="translate(2.60 30.10) scale(0.941 1)" font-size="8.60" fill="#dadada" font-weight="bold">ol</text></svg>
<svg class="a" style="left:481px;top:184px;" width="12" height="40"><text x="0" y="0" transform="translate(2.50 30.80) scale(1.110 1)" font-size="8.60" fill="#dadada" font-weight="bold">li</text></svg>
<svg class="a" style="left:482.5px;top:224px;" width="8" height="12" viewBox="0 0 8 12"><rect x="1.8" y="0.8" width="3.6" height="5.6" rx="1.8" fill="none" stroke="#c8c8c8" stroke-width="1"/><rect x="1.8" y="4.8" width="3.6" height="5.6" rx="1.8" fill="none" stroke="#c8c8c8" stroke-width="1"/></svg>
<div class="a" style="left:474px;top:247px;width:175px;height:0.8px;background:#2a2a2a;"></div>
<svg class="a" style="left:481.5px;top:261px;" width="10" height="9" viewBox="0 0 10 9"><rect x="0.6" y="0.6" width="8.8" height="8" fill="none" stroke="#c8c8c8" stroke-width="0.9"/><path d="M0.6 2.6 H9.4" stroke="#c8c8c8" stroke-width="0.9"/></svg>
<div class="a" style="left:474px;top:274px;width:186px;height:12.2px;background:#262626;"></div>
<div class="a" style="left:474px;top:274px;width:186px;height:0.8px;background:#222222;"></div>
<div class="a" style="left:502.8px;top:275px;width:0.8px;height:11px;background:#2a2a2a;"></div>
<div class="a" style="left:538.4px;top:274px;width:22.7px;height:12.2px;background:#333333;"></div>
<svg class="a" style="left:475px;top:253px;" width="27" height="40"><text x="0" y="0" transform="translate(2.80 30.40) scale(0.938 1)" font-size="7.25" fill="#bdbdbd" stroke="#bdbdbd" stroke-width="0.25">Assets</text></svg>
<svg class="a" style="left:505px;top:253px;" width="33" height="40"><text x="0" y="0" transform="translate(2.00 30.40) scale(0.951 1)" font-size="7.25" fill="#bdbdbd" stroke="#bdbdbd" stroke-width="0.25">Snippets</text></svg>
<svg class="a" style="left:540px;top:253px;" width="22" height="40"><text x="0" y="0" transform="translate(2.50 30.40) scale(0.904 1)" font-size="7.25" fill="#eeeeee" font-weight="bold">DOM</text></svg>
<svg class="a" style="left:647.5px;top:277px;" width="8" height="6" viewBox="0 0 8 6"><path d="M0.5 1 H7.5 M0.5 2.9 H7.5 M0.5 4.8 H7.5" stroke="#5c5c5c" stroke-width="1.1"/></svg>
<div class="a" style="left:474px;top:286.2px;width:186px;height:208.8px;background:#323232;"></div>
<div class="a" style="left:474px;top:292.45px;width:175px;height:0.6px;background:#2f2f2f;"></div>
<div class="a" style="left:474px;top:307.0px;width:175px;height:0.6px;background:#2f2f2f;"></div>
<div class="a" style="left:474px;top:321.55px;width:175px;height:0.6px;background:#2f2f2f;"></div>
<div class="a" style="left:474px;top:336.09999999999997px;width:175px;height:0.6px;background:#2f2f2f;"></div>
<div class="a" style="left:474px;top:350.65px;width:175px;height:0.6px;background:#2f2f2f;"></div>
<div class="a" style="left:474px;top:365.2px;width:175px;height:0.6px;background:#2f2f2f;"></div>
<div class="a" style="left:474px;top:379.75px;width:175px;height:0.6px;background:#2f2f2f;"></div>
<div class="a" style="left:474px;top:394.3px;width:175px;height:0.6px;background:#2f2f2f;"></div>
<div class="a" style="left:474px;top:408.84999999999997px;width:175px;height:0.6px;background:#2f2f2f;"></div>
<div class="a" style="left:474px;top:423.40000000000003px;width:175px;height:0.6px;background:#2f2f2f;"></div>
<div class="a" style="left:474px;top:437.95px;width:175px;height:0.6px;background:#2f2f2f;"></div>
<div class="a" style="left:474px;top:452.5px;width:175px;height:0.6px;background:#2f2f2f;"></div>
<div class="a" style="left:474px;top:467.05px;width:175px;height:0.6px;background:#2f2f2f;"></div>
<div class="a" style="left:474px;top:481.59999999999997px;width:175px;height:0.6px;background:#2f2f2f;"></div>
<div class="a" style="left:474px;top:496.15000000000003px;width:175px;height:0.6px;background:#2f2f2f;"></div>
<div class="a" style="left:473.5px;top:423.70000000000005px;width:177.5px;height:14.25px;background:#2c4869;"></div>
<svg class="a" style="left:475.5px;top:427px;" width="11" height="8" viewBox="0 0 11 8"><path d="M4.3 0.8 V7.2 M1.1 4 H7.5" stroke="#ffffff" stroke-width="1.5"/><circle cx="9.6" cy="6.8" r="0.6" fill="#ddd"/></svg>
<svg class="a" style="left:525px;top:272px;" width="31" height="40"><text x="2.00" y="30.62" font-size="7.60" fill="#ececec">section</text></svg>
<svg class="a" style="left:556px;top:273px;" width="26" height="40"><text x="2.78" y="30.02" font-size="7.50" fill="#dadada" stroke="#dadada" stroke-width="0.25">#offer</text></svg>
<svg class="a" style="left:525px;top:287px;" width="16" height="40"><text x="2.00" y="30.18" font-size="7.60" fill="#ececec">div</text></svg>
<svg class="a" style="left:542px;top:287px;" width="35" height="40"><text x="2.41" y="30.57" font-size="7.50" fill="#dadada" stroke="#dadada" stroke-width="0.25">#content</text></svg>
<svg class="a" style="left:534px;top:301px;" width="31" height="40"><text x="2.20" y="30.73" font-size="7.60" fill="#ececec">section</text></svg>
<svg class="a" style="left:565px;top:302px;" width="33" height="40"><text x="2.98" y="30.12" font-size="7.50" fill="#dadada" stroke="#dadada" stroke-width="0.25">.sidebar</text></svg>
<svg class="a" style="left:534px;top:316px;" width="31" height="40"><text x="2.20" y="30.27" font-size="7.60" fill="#ececec">section</text></svg>
<svg class="a" style="left:565px;top:316px;" width="51" height="40"><text x="2.98" y="30.67" font-size="7.50" fill="#dadada" stroke="#dadada" stroke-width="0.25">.mainContent</text></svg>
<svg class="a" style="left:543px;top:330px;" width="16" height="40"><text x="2.40" y="30.82" font-size="7.60" fill="#ececec">div</text></svg>
<svg class="a" style="left:560px;top:331px;" width="49" height="40"><text x="2.81" y="30.22" font-size="7.50" fill="#dadada" stroke="#dadada" stroke-width="0.25">.productRow</text></svg>
<svg class="a" style="left:552px;top:345px;" width="27" height="40"><text x="2.70" y="30.38" font-size="7.60" fill="#ececec">article</text></svg>
<svg class="a" style="left:580px;top:345px;" width="46" height="40"><text x="2.67" y="30.77" font-size="7.50" fill="#dadada" stroke="#dadada" stroke-width="0.25">.productInfo</text></svg>
<svg class="a" style="left:552px;top:359px;" width="27" height="40"><text x="2.70" y="30.93" font-size="7.60" fill="#ececec">article</text></svg>
<svg class="a" style="left:580px;top:360px;" width="46" height="40"><text x="2.67" y="30.32" font-size="7.50" fill="#dadada" stroke="#dadada" stroke-width="0.25">.productInfo</text></svg>
<svg class="a" style="left:552px;top:374px;" width="27" height="40"><text x="2.70" y="30.48" font-size="7.60" fill="#ececec">article</text></svg>
<svg class="a" style="left:580px;top:374px;" width="46" height="40"><text x="2.67" y="30.88" font-size="7.50" fill="#dadada" stroke="#dadada" stroke-width="0.25">.productInfo</text></svg>
<svg class="a" style="left:561px;top:389px;" width="16" height="40"><text x="2.60" y="30.02" font-size="7.60" fill="#ececec">div</text></svg>
<svg class="a" style="left:570px;top:403px;" width="19" height="40"><text x="2.70" y="30.58" font-size="7.60" fill="#ececec">img</text></svg>
<svg class="a" style="left:561px;top:418px;" width="11" height="40"><text x="2.60" y="30.12" font-size="7.60" fill="#ececec">p</text></svg>
<svg class="a" style="left:573px;top:418px;" width="25" height="40"><text x="2.53" y="30.52" font-size="7.50" fill="#dadada" stroke="#dadada" stroke-width="0.25">.price</text></svg>
<svg class="a" style="left:561px;top:432px;" width="11" height="40"><text x="2.60" y="30.68" font-size="7.60" fill="#ececec">p</text></svg>
<svg class="a" style="left:573px;top:433px;" width="60" height="40"><text x="2.53" y="30.07" font-size="7.50" fill="#dadada" stroke="#dadada" stroke-width="0.25">.productContent</text></svg>
<svg class="a" style="left:561px;top:447px;" width="23" height="40"><text x="2.60" y="30.23" font-size="7.60" fill="#ececec">input</text></svg>
<svg class="a" style="left:585px;top:447px;" width="42" height="40"><text x="2.78" y="30.62" font-size="7.50" fill="#dadada" stroke="#dadada" stroke-width="0.25">.buyButton</text></svg>
<svg class="a" style="left:543px;top:461px;" width="16" height="40"><text x="2.40" y="30.77" font-size="7.60" fill="#ececec">div</text></svg>
<svg class="a" style="left:0;top:0;overflow:hidden;clip-path:inset(286.2px 0 0 474px)" width="660" height="495" viewBox="0 0 660 495"><path d="M524.8 288.6 H552.8 L556.8 284.3" fill="none" stroke="#cfcfcf" stroke-width="0.9"/><path d="M527.3 290.8 H553.3 L557.8 286.1" fill="none" stroke="#cfcfcf" stroke-width="0.9"/><path d="M524.80 295.72 H552.48 L556.18 300.02 L552.48 304.42 H524.80 Z" fill="none" stroke="#cfcfcf" stroke-width="0.9"/><path d="M526.80 305.42 H552.48" stroke="#8a8a8a" stroke-width="1.3"/><path d="M526.80 306.42 H553.68 L557.98 300.82" fill="none" stroke="#cfcfcf" stroke-width="0.8"/><path d="M517.20 297.82 L519.50 300.02 L517.20 302.22" fill="none" stroke="#b0b0b0" stroke-width="0.9"/><path d="M524.80 310.27 H538.11 L541.81 314.57 L538.11 318.97 H524.80 Z" fill="none" stroke="#cfcfcf" stroke-width="0.9"/><path d="M516.80 313.27 L518.80 315.47 L520.80 313.27" fill="none" stroke="#b0b0b0" stroke-width="0.9"/><path d="M534.00 324.82 H561.68 L565.38 329.12 L561.68 333.52 H534.00 Z" fill="none" stroke="#cfcfcf" stroke-width="0.9"/><path d="M536.00 334.52 H561.68" stroke="#8a8a8a" stroke-width="1.3"/><path d="M536.00 335.52 H562.88 L567.18 329.93" fill="none" stroke="#cfcfcf" stroke-width="0.8"/><path d="M526.40 326.93 L528.70 329.12 L526.40 331.32" fill="none" stroke="#b0b0b0" stroke-width="0.9"/><path d="M534.00 339.37 H561.68 L565.38 343.67 L561.68 348.07 H534.00 Z" fill="none" stroke="#cfcfcf" stroke-width="0.9"/><path d="M526.00 342.37 L528.00 344.57 L530.00 342.37" fill="none" stroke="#b0b0b0" stroke-width="0.9"/><path d="M543.20 353.92 H556.51 L560.21 358.22 L556.51 362.62 H543.20 Z" fill="none" stroke="#cfcfcf" stroke-width="0.9"/><path d="M535.20 356.92 L537.20 359.12 L539.20 356.92" fill="none" stroke="#b0b0b0" stroke-width="0.9"/><path d="M552.50 368.47 H576.37 L580.07 372.77 L576.37 377.17 H552.50 Z" fill="none" stroke="#cfcfcf" stroke-width="0.9"/><path d="M554.50 378.17 H576.37" stroke="#8a8a8a" stroke-width="1.3"/><path d="M554.50 379.17 H577.57 L581.87 373.57" fill="none" stroke="#cfcfcf" stroke-width="0.8"/><path d="M544.90 370.57 L547.20 372.77 L544.90 374.97" fill="none" stroke="#b0b0b0" stroke-width="0.9"/><path d="M552.50 383.02 H576.37 L580.07 387.32 L576.37 391.72 H552.50 Z" fill="none" stroke="#cfcfcf" stroke-width="0.9"/><path d="M554.50 392.72 H576.37" stroke="#8a8a8a" stroke-width="1.3"/><path d="M554.50 393.72 H577.57 L581.87 388.12" fill="none" stroke="#cfcfcf" stroke-width="0.8"/><path d="M544.90 385.12 L547.20 387.32 L544.90 389.52" fill="none" stroke="#b0b0b0" stroke-width="0.9"/><path d="M552.50 397.57 H576.37 L580.07 401.88 L576.37 406.27 H552.50 Z" fill="none" stroke="#cfcfcf" stroke-width="0.9"/><path d="M544.50 400.57 L546.50 402.77 L548.50 400.57" fill="none" stroke="#b0b0b0" stroke-width="0.9"/><path d="M561.40 412.12 H574.71 L578.41 416.42 L574.71 420.82 H561.40 Z" fill="none" stroke="#cfcfcf" stroke-width="0.9"/><path d="M553.40 415.12 L555.40 417.32 L557.40 415.12" fill="none" stroke="#b0b0b0" stroke-width="0.9"/><path d="M570.50 426.68 H586.35 L590.05 430.98 L586.35 435.38 H570.50 Z" fill="none" stroke="#cfcfcf" stroke-width="0.9"/><path d="M561.40 441.22 H569.23 L572.93 445.52 L569.23 449.92 H561.40 Z" fill="none" stroke="#cfcfcf" stroke-width="0.9"/><path d="M561.40 455.77 H569.23 L572.93 460.07 L569.23 464.47 H561.40 Z" fill="none" stroke="#cfcfcf" stroke-width="0.9"/><path d="M561.40 470.32 H581.48 L585.18 474.62 L581.48 479.02 H561.40 Z" fill="none" stroke="#cfcfcf" stroke-width="0.9"/><path d="M543.20 484.87 H556.51 L560.21 489.17 L556.51 493.57 H543.20 Z" fill="none" stroke="#cfcfcf" stroke-width="0.9"/></svg>
<div class="a" style="left:474px;top:486px;width:175px;height:9px;background:#2f2f2f;"></div>
<div class="a" style="left:474px;top:487.2px;width:148.5px;height:5.8px;background:#3f3f3f;border-radius:3px"></div>
<div class="a" style="left:650.5px;top:286.2px;width:8.5px;height:208.8px;background:#2b2b2b;"></div>
<div class="a" style="left:651px;top:323.5px;width:7.5px;height:123.5px;background:#3b3b3b;border-radius:4px"></div>
<div class="a" style="left:22px;top:469px;width:450px;height:26px;background:#323232;"></div>
<div class="a" style="left:22px;top:469px;width:450px;height:1.2px;background:#2a2a2a;"></div>
<svg class="a" style="left:0;top:0" width="472" height="495" viewBox="0 0 472 495"><path d="M26.8 478.1 H49.2 L54.7 484.9 L49.2 491.7 H26.8 Z" fill="#282828"/><path d="M59.5 478.1 H76.5 L82 484.9 L76.5 491.7 H59.5 Z" fill="#282828"/><path d="M84 478.1 H101.1 L106.6 484.9 L101.1 491.7 H84 Z" fill="#282828"/><path d="M107.6 478.1 H138.5 L144 484.9 L138.5 491.7 H107.6 Z" fill="#282828"/><path d="M145.5 478.1 H161.2 L166.7 484.9 L161.2 491.7 H145.5 Z" fill="#282828"/><path d="M169.7 478.1 H194.5 L200 484.9 L194.5 491.7 H169.7 Z" fill="#282828"/><path d="M201.5 478.1 H240.0 L245.5 484.9 L240.0 491.7 H201.5 Z" fill="#282828"/><path d="M247 478.1 H262.5 L268 484.9 L262.5 491.7 H247 Z" fill="#282828"/><path d="M272.7 478.1 H293.0 L298.5 484.9 L293.0 491.7 H272.7 Z" fill="#3f5f83"/></svg>
<svg class="a" style="left:28px;top:457px;" width="23" height="40"><text x="2.98" y="30.60" font-size="7.40" fill="#a8a8a8">body</text></svg>
<svg class="a" style="left:62px;top:457px;" width="16" height="40"><text x="2.27" y="30.60" font-size="7.40" fill="#a8a8a8">div</text></svg>
<svg class="a" style="left:86px;top:457px;" width="16" height="40"><text x="2.82" y="30.60" font-size="7.40" fill="#a8a8a8">div</text></svg>
<svg class="a" style="left:110px;top:457px;" width="30" height="40"><text x="2.33" y="30.60" font-size="7.40" fill="#a8a8a8">section</text></svg>
<svg class="a" style="left:147px;top:457px;" width="16" height="40"><text x="2.62" y="30.60" font-size="7.40" fill="#a8a8a8">div</text></svg>
<svg class="a" style="left:171px;top:457px;" width="26" height="40"><text x="2.23" y="30.60" font-size="7.40" fill="#a8a8a8">article</text></svg>
<svg class="a" style="left:200px;top:457px;" width="46" height="40"><text x="2.21" y="30.60" font-size="7.40" fill="#a8a8a8">.productInfo</text></svg>
<svg class="a" style="left:249px;top:457px;" width="16" height="40"><text x="2.02" y="30.60" font-size="7.40" fill="#a8a8a8">div</text></svg>
<svg class="a" style="left:275px;top:457px;" width="18" height="40"><text x="2.89" y="30.60" font-size="7.40" fill="#ffffff">img</text></svg>
<svg class="a" style="left:356px;top:480.5px;" width="9" height="9" viewBox="0 0 9 9"><circle cx="4.5" cy="4.5" r="3.6" fill="none" stroke="#3fae49" stroke-width="1.1"/><path d="M2.7 4.6 L4 5.9 L6.4 3.2" fill="none" stroke="#3fae49" stroke-width="1"/></svg>
<div class="a" style="left:372.7px;top:478px;width:56.3px;height:12px;background:#262626;"></div>
<div class="a" style="left:22px;top:493.3px;width:450px;height:1.7px;background:#2a2a2a;"></div>
<svg class="a" style="left:375px;top:457px;" width="40" height="40"><text x="0" y="0" transform="translate(2.00 30.40) scale(0.971 1)" font-size="7.97" fill="#d8d8d8">718 x 594</text></svg>
<svg class="a" style="left:421px;top:482.5px;" width="7" height="4" viewBox="0 0 7 4"><path d="M0.8 0.8 L3.5 3.2 L6.2 0.8" fill="none" stroke="#bbb" stroke-width="0.9"/></svg>
<div class="a" style="left:433.5px;top:477px;width:0.8px;height:14px;background:#2a2a2a;"></div>
<svg class="a" style="left:442px;top:479px;" width="14" height="12" viewBox="0 0 14 12"><rect x="1.2" y="1.2" width="9.6" height="9.4" fill="none" stroke="#c8c8c8" stroke-width="1"/><path d="M1.2 2.8 H10.8" stroke="#d0d0d0" stroke-width="1.4"/><circle cx="5.2" cy="6.8" r="2.1" fill="#c8c8c8"/><path d="M4.2 5.6 L6 6.6 L5 8.2" stroke="#323232" stroke-width="0.7" fill="none"/><rect x="8.8" y="5.2" width="4.2" height="5.6" fill="#323232" stroke="#c8c8c8" stroke-width="0.9"/></svg>
</body></html>
